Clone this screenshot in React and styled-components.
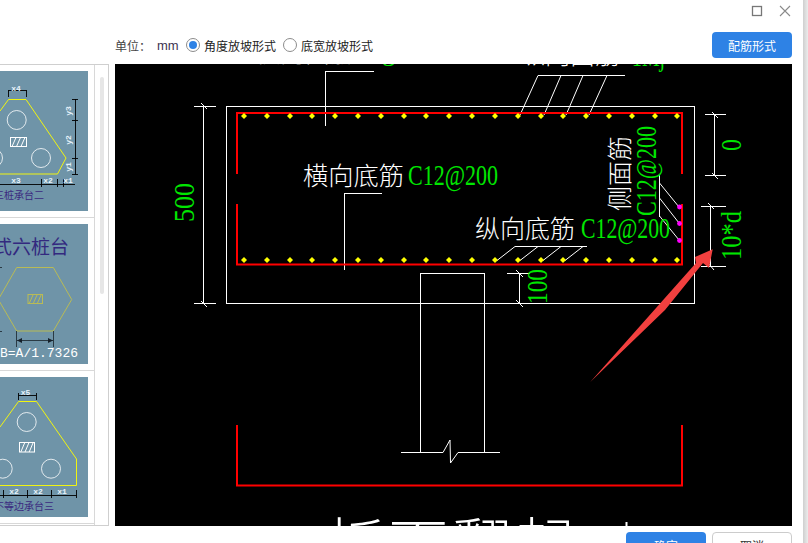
import React from 'react';
import styled, { createGlobalStyle } from 'styled-components';

const DOT_X = [244, 267, 290, 312, 335, 358, 381, 404, 426, 449, 472, 495, 518, 541, 563, 586, 609, 632, 655, 677];

const WHITE_LINES = [
  // leaders
  'M325.5 71V126M325.5 71.5H374',
  'M344.5 193V270M344.5 193.5H382',
  'M538 75.5H625M538 75.5L520 115M561 75.5L544 115M583 75.5L566 115M607 75.5L589 115',
  'M515 246.5H587M515 246.5L497 260.5M538 246.5L520 260.5M561 246.5L543 260.5M583 246.5L565 260.5',
  'M659.5 175V217M659.5 183L679 207M659.5 198L679 223M659.5 216L679 240',
  // column and break line
  'M420.5 273.5H484.5M420.5 273V452M484.5 273V452',
  'M401 452.5H443L450 440L450.5 463L458 452.5H500',
  // dimensions
  'M203.5 106V303M194 106.5H216M194 303.5H216M201 103L207 109M201 301L207 307',
  'M714.5 114V175M705 114.5H726M705 175.5H726M712 112L718 118M712 173L718 179',
  'M710.5 206V266M701 206.5H726M701 266.5H726M708 203L714 209M708 263L714 270',
  'M519.5 273V303M507 273.5H530M516 270L523 277M516 300L523 307',
];

const Dot = ({ x, y }) => <polygon points={`${x},${y - 3} ${x + 3},${y} ${x},${y + 3} ${x - 3},${y}`} fill="#ffff00" />;

const Hatch = ({ x, y, w, h, color }) => (
  <g stroke={color} fill="none" strokeWidth="1">
    <rect x={x} y={y} width={w} height={h} />
    {[0.22, 0.5, 0.78].map((k) => (
      <path key={k} d={`M${x + w * k + 2} ${y}L${x + w * k - 2} ${y + h}`} />
    ))}
  </g>
);

const Pile = ({ cx, cy }) => <circle cx={cx} cy={cy} r="9.5" stroke="#fff" strokeWidth="0.8" fill="none" />;

const ThumbOne = () => (
  <Thumb viewBox="0 71 88 140">
    <path d="M0 111L8.5 99.5H26L66 158L57.5 174H0" fill="none" stroke="#ffff00" strokeWidth="0.9" />
    <Pile cx={16.7} cy={120} />
    <Pile cx={41} cy={158} />
    <Pile cx={-7} cy={158} />
    <Hatch x={10.5} y={137.5} w={16} h={9} color="#fff" />
    <path
      d="M8.5 90.5H26.5M8.5 90V97M26.5 90V97M75.5 99V174.5M72 99.5H78M72 120.5H78M72 158.5H78M72 174.5H78M0 184.5H75M41.5 179V187M57.5 179V187M63.5 179V187"
      stroke="#000"
      fill="none"
      strokeWidth="0.9"
    />
    <DimText x="16" y="91" textAnchor="middle">x4</DimText>
    <DimText x="16" y="183" textAnchor="middle">x3</DimText>
    <DimText x="48" y="183" textAnchor="middle">x2</DimText>
    <DimText x="68" y="183" textAnchor="middle">x1</DimText>
    <DimText x="71" y="111" textAnchor="middle" transform="rotate(-90 71 111)">y3</DimText>
    <DimText x="71" y="140" textAnchor="middle" transform="rotate(-90 71 140)">y2</DimText>
    <DimText x="71" y="167" textAnchor="middle" transform="rotate(-90 71 167)">y1</DimText>
    <Caption x="44" y="199" textAnchor="end">三桩承台二</Caption>
  </Thumb>
);

const ThumbTwo = () => (
  <Thumb viewBox="0 224 88 140">
    <BigCaption x="69" y="254" textAnchor="end">式六桩台</BigCaption>
    <path d="M16.7 267.5H53.3L71.7 299.5L53.3 331H16.7L-1.7 299.5Z" fill="none" stroke="#b9bb55" strokeWidth="1" />
    <Hatch x={28} y={294.5} w={14.5} h={9} color="#b9bb55" />
    <path d="M16.5 331V347M53.5 331V347M17 340.5H53" stroke="#2a3a44" fill="none" strokeWidth="1" />
    <path d="M17 340.5L22 338V343ZM53 340.5L48 338V343Z" fill="#15202a" />
    <path d="M0 267.5H2M0 331.5H2" stroke="#2a3a44" />
    <MonoText x="78" y="357" textAnchor="end">B=A/1.7326</MonoText>
  </Thumb>
);

const ThumbThree = () => (
  <Thumb viewBox="0 377 88 140">
    <path d="M0 427L18.5 401.5H36.5L76.5 459V485.5H0" fill="none" stroke="#ffff00" strokeWidth="0.9" />
    <Pile cx={26.7} cy={422} />
    <Pile cx={51} cy={468.7} />
    <Pile cx={2.7} cy={468.7} />
    <Hatch x={19.5} y={442.5} w={15} h={9.5} color="#fff" />
    <path
      d="M18.5 395.5H36.5M18.5 393V400M36.5 393V400M0 495.5H76.5M3.5 490V498M27.5 490V498M51.5 490V498M76.5 490V498"
      stroke="#000"
      fill="none"
      strokeWidth="0.9"
    />
    <DimText x="25.5" y="395" textAnchor="middle">x5</DimText>
    <DimText x="14" y="494" textAnchor="middle">x2</DimText>
    <DimText x="38" y="494" textAnchor="middle">x2</DimText>
    <DimText x="62" y="494" textAnchor="middle">x1</DimText>
    <Caption x="54" y="510" textAnchor="end">不等边承台三</Caption>
  </Thumb>
);

const Drawing = () => (
  <CadSvg viewBox="115 64 677 462">
    <rect x="226.5" y="106.5" width="468" height="197" fill="none" stroke="#fff" />
    {WHITE_LINES.map((d) => (
      <path key={d} d={d} fill="none" stroke="#fff" />
    ))}

    <path
      d="M237 174V113H682V174M237 204V264.5H682V204M237 425V485.5H682V425"
      fill="none"
      stroke="#ff0000"
      strokeWidth="2"
    />
    {DOT_X.map((x) => (
      <React.Fragment key={x}>
        <Dot x={x} y={116} />
        <Dot x={x} y={260} />
      </React.Fragment>
    ))}
    {[207, 223.5, 240.5].map((y) => (
      <circle key={y} cx="679.5" cy={y} r="2.4" fill="#ff00ff" />
    ))}

    <CnText x="255" y="62" fontSize="25" textLength="100" lengthAdjust="spacingAndGlyphs">横向面筋</CnText>
    <GreenText x="382" y="60" fontSize="27">g</GreenText>
    <CnText x="520" y="64" fontSize="25" textLength="100" lengthAdjust="spacingAndGlyphs">纵向面筋</CnText>
    <GreenText x="632" y="66" fontSize="27" textLength="33" lengthAdjust="spacingAndGlyphs">1Mj</GreenText>

    <CnText x="303" y="185" fontSize="25" textLength="101" lengthAdjust="spacingAndGlyphs">横向底筋</CnText>
    <GreenText x="408" y="185" fontSize="29" textLength="90" lengthAdjust="spacingAndGlyphs">C12@200</GreenText>
    <CnText x="475" y="238" fontSize="25" textLength="100" lengthAdjust="spacingAndGlyphs">纵向底筋</CnText>
    <GreenText x="581" y="238" fontSize="29" textLength="89" lengthAdjust="spacingAndGlyphs">C12@200</GreenText>

    <CnText x="629" y="211" fontSize="25" textLength="75" transform="rotate(-90 629 211)">侧面筋</CnText>
    <GreenText x="656" y="216" fontSize="29" textLength="90" lengthAdjust="spacingAndGlyphs" transform="rotate(-90 656 216)">C12@200</GreenText>
    <GreenText x="194" y="222" fontSize="29" textLength="39" lengthAdjust="spacingAndGlyphs" transform="rotate(-90 194 222)">500</GreenText>
    <GreenText x="741" y="151" fontSize="29" textLength="12" lengthAdjust="spacingAndGlyphs" transform="rotate(-90 741 151)">0</GreenText>
    <GreenText x="741" y="260" fontSize="29" textLength="49" lengthAdjust="spacingAndGlyphs" transform="rotate(-90 741 260)">10*d</GreenText>
    <GreenText x="547" y="304" fontSize="29" textLength="35" lengthAdjust="spacingAndGlyphs" transform="rotate(-90 547 304)">100</GreenText>

    <CnText x="325" y="568" fontSize="60" textLength="250">板面翻起</CnText>
    <path d="M626.5 522V526" stroke="#fff" strokeWidth="2" />

    <polygon points="590.3,382 696,263 695,257 712.7,249.3 709,268 703,263 665,310" fill="#f2403f" />
  </CadSvg>
);

const App = () => {
  return (
    <>
      <GlobalStyle />
      <Page>
        <Main>
          <TitleBar>
            <svg width="12" height="12" viewBox="0 0 12 12">
              <rect x="1.5" y="1.5" width="9" height="9" fill="none" stroke="#777" strokeWidth="1.3" />
            </svg>
            <svg width="12" height="12" viewBox="0 0 12 12">
              <path d="M1 1L11 11M11 1L1 11" stroke="#8a8a8a" strokeWidth="1.1" />
            </svg>
          </TitleBar>

          <Toolbar>
            <UnitLabel>单位：</UnitLabel>
            <UnitValue>mm</UnitValue>
            <RadioGroup>
              <Radio $checked />
              <RadioText>角度放坡形式</RadioText>
            </RadioGroup>
            <RadioGroup>
              <Radio />
              <RadioText>底宽放坡形式</RadioText>
            </RadioGroup>
            <PrimaryButton $pushRight>配筋形式</PrimaryButton>
          </Toolbar>

          <Body>
            <SidePanel>
              <ThumbList>
                <ThumbItem><ThumbOne /></ThumbItem>
                <ThumbItem><ThumbTwo /></ThumbItem>
                <ThumbItem><ThumbThree /></ThumbItem>
              </ThumbList>
              <ScrollTrack>
                <ScrollThumb />
              </ScrollTrack>
            </SidePanel>
            <Canvas>
              <Drawing />
            </Canvas>
          </Body>

          <Footer>
            <PrimaryButton>确定</PrimaryButton>
            <GhostButton>取消</GhostButton>
          </Footer>
        </Main>
        <EdgeShade />
      </Page>
    </>
  );
};

export default App;

const GlobalStyle = createGlobalStyle`
  html, body {
    margin: 0;
    padding: 0;
    background: #fff;
    overflow: hidden;
  }
`;

const Page = styled.div`
  width: 808px;
  height: 543px;
  display: flex;
  overflow: hidden;
  background: #fff;
  font-family: "Liberation Sans", "Noto Sans CJK SC", sans-serif;
`;

const Main = styled.div`
  width: 803px;
  flex: none;
  display: flex;
  flex-direction: column;
`;

const EdgeShade = styled.div`
  flex: 1;
  background: linear-gradient(90deg, #cfcfcf, #ececec);
`;

const TitleBar = styled.div`
  height: 26px;
  flex: none;
  box-sizing: border-box;
  padding: 5px 12px 0 0;
  display: flex;
  justify-content: flex-end;
  align-items: flex-start;
  gap: 16px;
`;

const Toolbar = styled.div`
  height: 38px;
  flex: none;
  box-sizing: border-box;
  padding: 0 11px 0 115px;
  display: flex;
  align-items: center;
  font-size: 12px;
  color: #333;
`;

const UnitLabel = styled.span`
  width: 42px;
  color: #444;
`;

const UnitValue = styled.span`
  width: 29px;
  font-size: 13px;
  color: #3d3350;
`;

const RadioGroup = styled.label`
  display: flex;
  align-items: center;
  gap: 4px;
  margin-right: 7px;
`;

const Radio = styled.span`
  width: 14px;
  height: 14px;
  box-sizing: border-box;
  border-radius: 50%;
  border: 1px solid #8c8c8c;
  display: flex;
  align-items: center;
  justify-content: center;

  &::after {
    content: '';
    width: 8px;
    height: 8px;
    border-radius: 50%;
    background: ${(p) => (p.$checked ? '#2e82e5' : 'transparent')};
  }
`;

const RadioText = styled.span`
  font-size: 12px;
  color: #222;
`;

const PrimaryButton = styled.button`
  width: 80px;
  height: 26px;
  flex: none;
  padding: 0;
  border: 0;
  border-radius: 4px;
  background: #2e82e5;
  color: #fff;
  font: 12px "Liberation Sans", "Noto Sans CJK SC", sans-serif;
  margin-left: ${(p) => (p.$pushRight ? 'auto' : '0')};
`;

const GhostButton = styled(PrimaryButton)`
  box-sizing: border-box;
  border: 1px solid #ccc;
  background: #fff;
  color: #333;
`;

const Body = styled.div`
  height: 462px;
  flex: none;
  display: flex;
  gap: 6px;
`;

const SidePanel = styled.div`
  width: 109px;
  flex: none;
  box-sizing: border-box;
  display: flex;
  border: 1px solid #cfcfcf;
  border-left: 0;
`;

const ThumbList = styled.div`
  width: 95px;
  flex: none;
  box-sizing: border-box;
  border-right: 1px solid #d8d8d8;
`;

const ThumbItem = styled.div`
  height: 153px;
  box-sizing: border-box;
  padding: 6px 6px 6px 0;
  border-bottom: 1px solid #d8d8d8;
`;

const Thumb = styled.svg`
  display: block;
  width: 88px;
  height: 140px;
  background: #6f94a8;
`;

const DimText = styled.text`
  font: bold 8px "Liberation Mono", monospace;
  fill: #e6f2fa;
`;

const Caption = styled.text`
  font: 10px "Noto Sans CJK SC", sans-serif;
  fill: #3b2a80;
`;

const BigCaption = styled.text`
  font: 19px "Noto Sans CJK SC", sans-serif;
  fill: #33297f;
`;

const MonoText = styled.text`
  font: 13px "Liberation Mono", monospace;
  fill: #fff;
`;

const ScrollTrack = styled.div`
  flex: 1;
  box-sizing: border-box;
  padding: 12px 0 0 5px;
`;

const ScrollThumb = styled.div`
  width: 4px;
  height: 217px;
  border-radius: 2px;
  background: #e6e6e6;
`;

const Canvas = styled.div`
  width: 677px;
  flex: none;
  background: #000;
`;

const CadSvg = styled.svg`
  display: block;
  width: 677px;
  height: 462px;
`;

const CnText = styled.text`
  font-family: "Noto Sans CJK SC", sans-serif;
  font-weight: 300;
  fill: #fff;
`;

const GreenText = styled.text`
  font-family: "Liberation Serif", serif;
  fill: #00e600;
`;

const Footer = styled.div`
  flex: 1;
  box-sizing: border-box;
  padding: 6px 0 0 0;
  margin-right: 11px;
  display: flex;
  justify-content: flex-end;
  gap: 6px;
`;
